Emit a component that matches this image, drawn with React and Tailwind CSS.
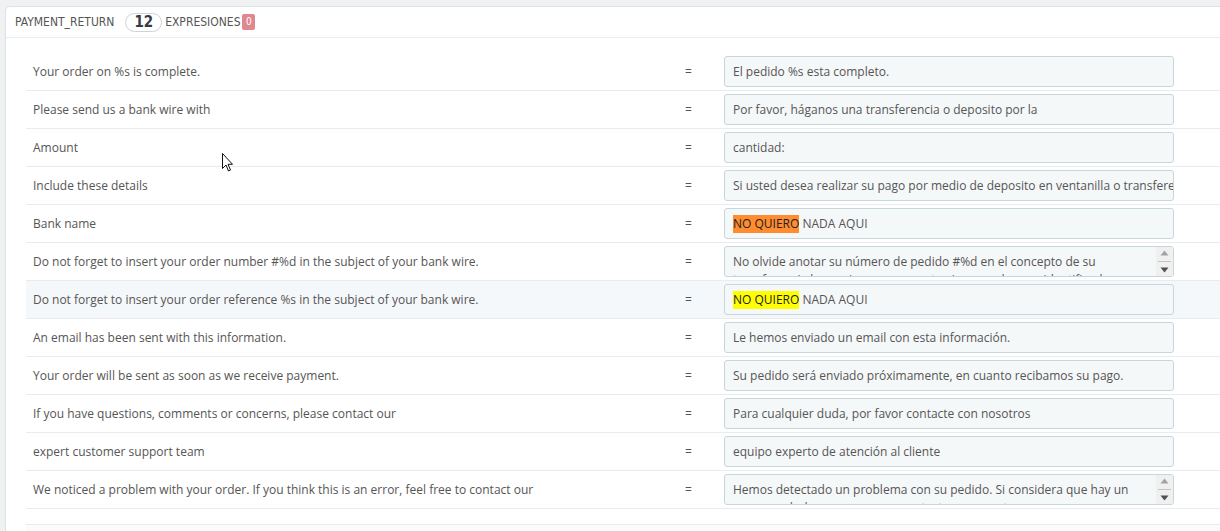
import React from "react";

const rows = [
  { l: "Your order on %s is complete.", r: "El pedido %s esta completo." },
  { l: "Please send us a bank wire with", r: "Por favor, háganos una transferencia o deposito por la" },
  { l: "Amount", r: "cantidad:" },
  { l: "Include these details", r: "Si usted desea realizar su pago por medio de deposito en ventanilla o transferencia electrónica" },
  { l: "Bank name", hl: "orange" },
  {
    l: "Do not forget to insert your order number #%d in the subject of your bank wire.",
    r: "No olvide anotar su número de pedido #%d en el concepto de su",
    r2: "transferencia bancaria, en caso contrario no podremos identificarla.",
    ta: true,
  },
  { l: "Do not forget to insert your order reference %s in the subject of your bank wire.", hl: "yellow", active: true },
  { l: "An email has been sent with this information.", r: "Le hemos enviado un email con esta información." },
  { l: "Your order will be sent as soon as we receive payment.", r: "Su pedido será enviado próximamente, en cuanto recibamos su pago." },
  { l: "If you have questions, comments or concerns, please contact our", r: "Para cualquier duda, por favor contacte con nosotros" },
  { l: "expert customer support team", r: "equipo experto de atención al cliente" },
  {
    l: "We noticed a problem with your order. If you think this is an error, feel free to contact our",
    r: "Hemos detectado un problema con su pedido. Si considera que hay un",
    r2: "error, no dude en ponerse en contacto con nuestro",
    ta: true,
  },
];

function Field({ row }) {
  const base =
    "w-[450px] h-[31px] bg-[#f5f8f9] border border-[#c7d6db] rounded-[3px] text-[12px] text-[#555] overflow-hidden";
  if (row.hl) {
    return (
      <div className={base + " flex items-center pl-[8px] whitespace-nowrap"}>
        <span className={(row.hl === "orange" ? "bg-[#ff8c2f]" : "bg-[#ffff00]") + " text-[#222] leading-[18px]"}>
          NO QUIERO
        </span>
        <span className="leading-[18px]">&nbsp;NADA AQUI</span>
      </div>
    );
  }
  if (row.ta) {
    return (
      <div className={base + " flex"}>
        <div className="flex-1 pl-[8px] pt-[6px] leading-[18px] whitespace-nowrap overflow-hidden">
          <div>{row.r}</div>
          <div>{row.r2}</div>
        </div>
        <div className="w-[17px] bg-[#f0f0f0] flex flex-col items-center justify-between py-[3px]">
          <svg width="9" height="6" viewBox="0 0 9 6">
            <path d="M0.5 5.5 L4.5 0.5 L8.5 5.5 Z" fill="#a3a3a3" />
          </svg>
          <div className="w-[13px] h-px bg-[#c4c4c4]" />
          <svg width="9" height="6" viewBox="0 0 9 6">
            <path d="M0.5 0.5 L4.5 5.5 L8.5 0.5 Z" fill="#505050" />
          </svg>
        </div>
      </div>
    );
  }
  return (
    <div className={base + " flex items-center pl-[8px] whitespace-nowrap"}>
      {row.r}
    </div>
  );
}

export default function App() {
  return (
    <div
      className="w-[1220px] h-[531px] overflow-hidden bg-[#eff1f2] relative"
      style={{ fontFamily: '"Open Sans", "Liberation Sans", sans-serif' }}
    >
      <div className="absolute left-[5px] top-[6px] w-[1260px] h-[560px] bg-white border border-[#dfe2e5] rounded-[5px] flex flex-col">
        <div
          className="h-[31px] border-b border-[#eaedef] flex items-center pl-[9px] text-[12px] text-[#555] shrink-0"
          style={{ fontFamily: '"DejaVu Sans Condensed", "Liberation Sans Narrow", "Liberation Sans", sans-serif', fontStretch: "condensed" }}
        >
          <span>PAYMENT_RETURN</span>
          <span className="ml-[11px] h-[19px] px-[8px] rounded-full border border-[#cfd4d8] text-[15px] font-bold text-[#363a41] flex items-center leading-none">
            12
          </span>
          <span className="ml-[3px]">EXPRESIONES</span>
          <span className="ml-[2px] h-[16px] w-[13px] bg-[#e0888f] rounded-[2px] text-white text-[10px] flex items-center justify-center leading-none">
            0
          </span>
        </div>
        <div className="pl-[20px] pt-[15px] flex-1 flex flex-col">
          {rows.map((row, i) => (
            <div
              key={i}
              className={
                "h-[38px] border-b border-[#e9ecee] flex items-center text-[12px] text-[#555] " +
                (row.active ? "bg-[#f5f8fa]" : "")
              }
            >
              <div className="w-[659px] pl-[7px] whitespace-nowrap">{row.l}</div>
              <div className="w-[39px]">=</div>
              <Field row={row} />
            </div>
          ))}
          <div className="h-[15px]" />
          <div className="border-t border-[#e9ecee] bg-[#fafbfc] flex-1" />
        </div>
      </div>
      <svg className="absolute left-[221px] top-[152px]" width="13" height="21" viewBox="0 0 13 21">
        <path
          d="M1.5 1.5 L1.5 16.5 L5 13 L7.5 19 L9.5 18 L7 12.3 L11.5 12.3 Z"
          fill="white"
          stroke="#111"
          strokeWidth="1"
          strokeLinejoin="miter"
        />
      </svg>
    </div>
  );
}
